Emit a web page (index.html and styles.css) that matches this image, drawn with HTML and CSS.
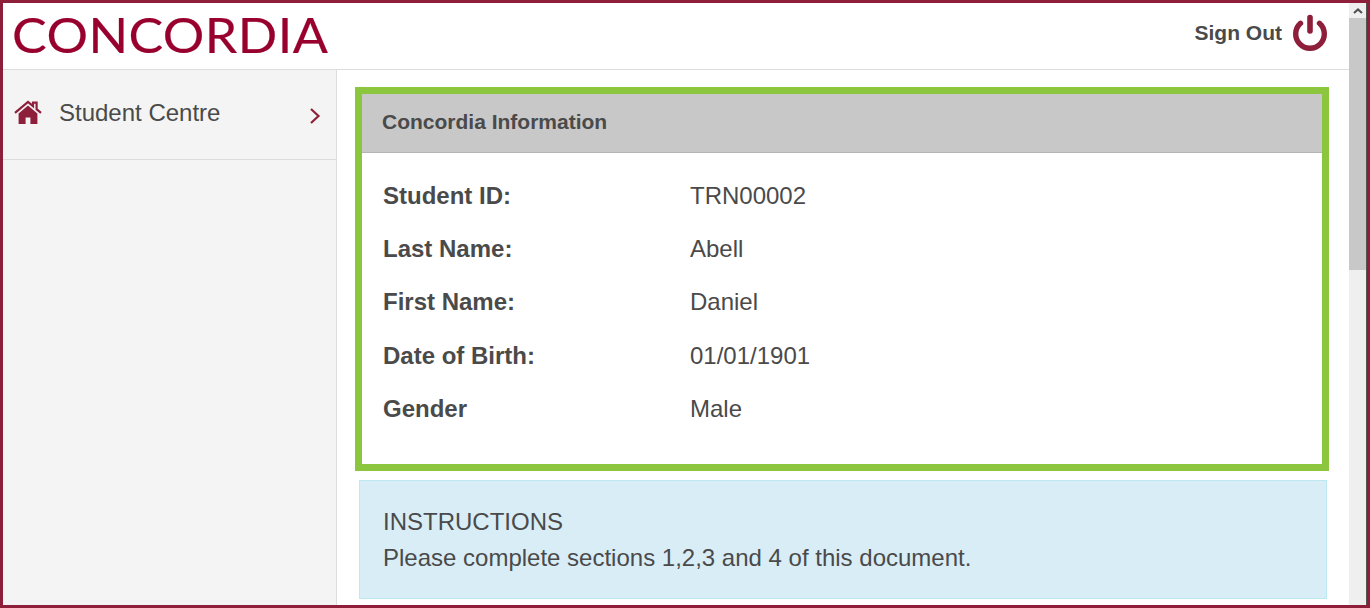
FILE: index.html
```html
<!DOCTYPE html>
<html lang="en">
  <head>
    <meta charset="UTF-8" />
    <title>Concordia Information</title>
    <link rel="stylesheet" href="styles.css">
  </head>
  <body>
    <div class="frame">
      <div class="page">
        <header class="header">
          <div class="logo">CONCORDIA</div>
          <a class="sign-out" href="#">
            Sign Out
            <svg class="power-icon" viewBox="0 0 36 38" width="36" height="38" aria-hidden="true">
              <path d="M8.5 9.3A14.3 14.3 0 1 0 27.5 9.3" fill="none" stroke="#8e1f3a" stroke-width="5.4" stroke-linecap="round" />
              <path d="M18 3.5v13.5" fill="none" stroke="#8e1f3a" stroke-width="5.6" stroke-linecap="round" />
            </svg>
          </a>
        </header>

        <div class="content">
          <nav class="sidebar">
            <a class="nav-item" href="#">
              <svg class="home-icon" viewBox="0 0 28 24" width="28" height="24" aria-hidden="true">
                <path d="M4.6 13.4 14 5.6l9.4 7.8V24h-7v-6.6h-4.8V24h-7z" fill="#8e1f3a" />
                <path d="M1 12.8 14 2l5 4.2V2.6h3.6v6.6l4.4 3.6" fill="none" stroke="#8e1f3a" stroke-width="2.2" />
              </svg>
              <span class="nav-label">Student Centre</span>
              <svg class="chevron" viewBox="0 0 12 18" width="12" height="18" aria-hidden="true">
                <path d="M2 2l7.5 7L2 16" fill="none" stroke="#8e1f3a" stroke-width="2.2" />
              </svg>
            </a>
          </nav>

          <main class="main">
            <section class="info-panel">
              <h2 class="panel-title">Concordia Information</h2>
              <dl class="info-list">
                <div class="info-row"><dt>Student ID:</dt><dd>TRN00002</dd></div>
                <div class="info-row"><dt>Last Name:</dt><dd>Abell</dd></div>
                <div class="info-row"><dt>First Name:</dt><dd>Daniel</dd></div>
                <div class="info-row"><dt>Date of Birth:</dt><dd>01/01/1901</dd></div>
                <div class="info-row"><dt>Gender</dt><dd>Male</dd></div>
              </dl>
            </section>

            <div class="instructions">
              <p>INSTRUCTIONS</p>
              <p>Please complete sections 1,2,3 and 4 of this document.</p>
            </div>
          </main>
        </div>
      </div>

      <div class="scrollbar">
        <div class="scroll-arrow">
          <svg viewBox="0 0 10 6" width="10" height="6" aria-hidden="true">
            <path d="M1 5l4-3.6L9 5" fill="none" stroke="#505050" stroke-width="2" />
          </svg>
        </div>
        <div class="scroll-thumb"></div>
      </div>
    </div>
  </body>
</html>
```

FILE: styles.css
```css
* {
  margin: 0;
  padding: 0;
  box-sizing: border-box;
}

:root {
  --maroon: #8e1f3a;
  --text-color: #4a4a4a;
  --line: #dddddd;
}

html,
body {
  height: 100%;
  overflow: hidden;
}

body {
  font-family: "Liberation Sans", Arial, sans-serif;
  color: var(--text-color);
  background: #fff;
}

a {
  color: inherit;
  text-decoration: none;
}

.frame {
  height: 608px;
  border: 3px solid var(--maroon);
  display: flex;
  overflow: hidden;
}

.page {
  flex: 1;
  min-width: 0;
  display: flex;
  flex-direction: column;
}

.header {
  height: 67px;
  flex: none;
  border-bottom: 1px solid var(--line);
  display: flex;
  align-items: center;
  justify-content: space-between;
  padding: 0 21px 0 9px;
}

.logo {
  font-family: "Lato", sans-serif;
  font-size: 49px;
  line-height: 1;
  color: #98002e;
  letter-spacing: 0.4px;
  margin-top: -4px;
  -webkit-text-stroke: 0.2px #98002e;
  transform: scaleX(1.06);
  transform-origin: left center;
}

.sign-out {
  display: flex;
  align-items: center;
  gap: 10px;
  font-size: 21px;
  font-weight: 700;
  margin-top: -6px;
}

.power-icon {
  display: block;
}

.content {
  flex: 1;
  display: flex;
  min-height: 0;
}

.sidebar {
  width: 334px;
  flex: none;
  background: #f4f4f4;
  border-right: 1px solid var(--line);
}

.nav-item {
  height: 90px;
  border-bottom: 1px solid var(--line);
  display: flex;
  align-items: flex-start;
  padding: 29px 15px 0 11px;
  font-size: 24px;
  line-height: 28px;
}

.home-icon {
  flex: none;
  margin-top: 1px;
}

.nav-label {
  flex: 1;
  margin-left: 17px;
}

.chevron {
  flex: none;
  margin-top: 8px;
}

.main {
  flex: 1;
  min-width: 0;
  padding: 17px 20px 0 18px;
}

.info-panel {
  height: 384px;
  border: 7px solid #8cc63f;
}

.panel-title {
  height: 59px;
  background: #c8c8c8;
  border-bottom: 1px solid #b4b4b4;
  padding-left: 20px;
  font-size: 21px;
  font-weight: 700;
  line-height: 56px;
}

.info-list {
  padding: 16px 20px 0 21px;
}

.info-row {
  display: flex;
  height: 53.2px;
  font-size: 24px;
  line-height: 53px;
}

.info-row dt {
  width: 307px;
  font-weight: 700;
}

.instructions {
  height: 119px;
  margin: 9px 2px 0 4px;
  background: #d9edf7;
  border: 1px solid #bce8f1;
  padding: 23px 23px 0;
  font-size: 24px;
  line-height: 36px;
}

.scrollbar {
  width: 18px;
  flex: none;
  background: #efefef;
  border-right: 1px solid #555555;
  display: flex;
  flex-direction: column;
}

.scroll-arrow {
  height: 15px;
  display: flex;
  align-items: center;
  justify-content: center;
}

.scroll-thumb {
  height: 252px;
  background: #c8c8c8;
}
```
